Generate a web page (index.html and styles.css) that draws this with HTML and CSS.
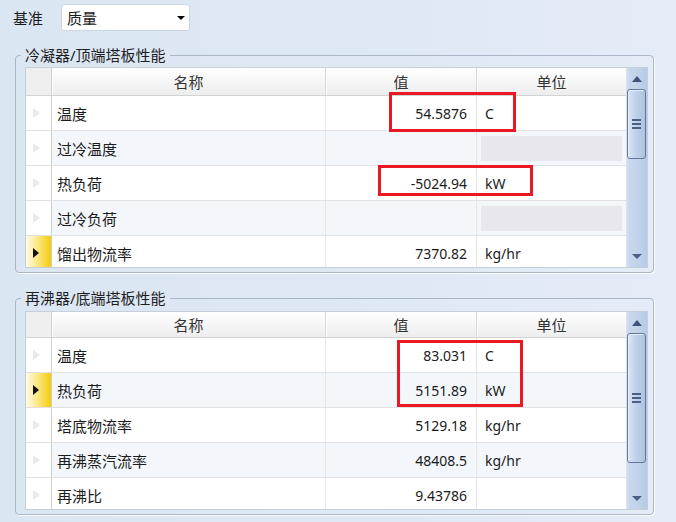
FILE: index.html
```html
<!DOCTYPE html>
<html lang="zh">
<head>
<meta charset="utf-8">
<title>塔板性能</title>
<link rel="stylesheet" href="styles.css">
</head>
<body>
<div class="topbar">
  <span class="lbl">基准</span>
  <div class="combo"><span>质量</span><span class="caret"></span></div>
</div>

<fieldset class="group g1">
  <legend>冷凝器/顶端塔板性能</legend>
  <div class="grid">
    <div class="table">
      <div class="row head">
        <div class="hind"></div><div class="hc">名称</div><div class="hc">值</div><div class="hc last">单位</div>
      </div>
      <div class="body">
        <div class="row"><div class="ind"><span class="tri"></span></div><div class="c name">温度</div><div class="c val">54.5876</div><div class="c unit">C</div></div>
        <div class="row alt"><div class="ind"><span class="tri"></span></div><div class="c name">过冷温度</div><div class="c val"></div><div class="c unit"><div class="dis"></div></div></div>
        <div class="row"><div class="ind"><span class="tri"></span></div><div class="c name">热负荷</div><div class="c val">-5024.94</div><div class="c unit">kW</div></div>
        <div class="row alt"><div class="ind"><span class="tri"></span></div><div class="c name">过冷负荷</div><div class="c val"></div><div class="c unit"><div class="dis"></div></div></div>
        <div class="row"><div class="ind sel"><span class="tri"></span></div><div class="c name">馏出物流率</div><div class="c val">7370.82</div><div class="c unit">kg/hr</div></div>
      </div>
    </div>
    <div class="sb">
      <div class="arr up"></div>
      <div class="track"><div class="thumb t1"><span class="grip"></span></div></div>
      <div class="arr down"></div>
    </div>
  </div>
</fieldset>

<fieldset class="group g2">
  <legend>再沸器/底端塔板性能</legend>
  <div class="grid">
    <div class="table">
      <div class="row head">
        <div class="hind"></div><div class="hc">名称</div><div class="hc">值</div><div class="hc last">单位</div>
      </div>
      <div class="body">
        <div class="row"><div class="ind"><span class="tri"></span></div><div class="c name">温度</div><div class="c val">83.031</div><div class="c unit">C</div></div>
        <div class="row alt"><div class="ind sel"><span class="tri"></span></div><div class="c name">热负荷</div><div class="c val">5151.89</div><div class="c unit">kW</div></div>
        <div class="row"><div class="ind"><span class="tri"></span></div><div class="c name">塔底物流率</div><div class="c val">5129.18</div><div class="c unit">kg/hr</div></div>
        <div class="row alt"><div class="ind"><span class="tri"></span></div><div class="c name">再沸蒸汽流率</div><div class="c val">48408.5</div><div class="c unit">kg/hr</div></div>
        <div class="row"><div class="ind"><span class="tri"></span></div><div class="c name">再沸比</div><div class="c val">9.43786</div><div class="c unit"></div></div>
      </div>
    </div>
    <div class="sb">
      <div class="arr up"></div>
      <div class="track"><div class="thumb t2"><span class="grip"></span></div></div>
      <div class="arr down"></div>
    </div>
  </div>
</fieldset>

<div class="mark m1"></div>
<div class="mark m2"></div>
<div class="mark m3"></div>
</body>
</html>
```

FILE: styles.css
```css
* { box-sizing: border-box; }

html, body { margin: 0; padding: 0; }

body {
  width: 676px;
  height: 522px;
  overflow: hidden;
  position: relative;
  background: linear-gradient(to right, #dbe6f3 0%, #dfe9f5 60%, #e4ecf7 100%);
  font-family: "Noto Sans", "Noto Sans CJK SC", sans-serif;
  font-size: 14px;
  color: #1b1b1b;
}

/* top row */
.topbar {
  display: flex;
  align-items: center;
  height: 27px;
  margin-top: 4px;
  padding-left: 13px;
}
.lbl { width: 48px; font-size: 15px; line-height: 16px; }
.combo {
  width: 129px;
  height: 27px;
  background: #fff;
  border: 1px solid #cdd7e3;
  border-radius: 3px;
  display: flex;
  align-items: center;
  justify-content: space-between;
  padding: 0 4px 0 5px;
  font-size: 15px;
}
.caret {
  width: 0; height: 0;
  border-left: 4px solid transparent;
  border-right: 4px solid transparent;
  border-top: 4px solid #000;
  margin-top: 1px;
}

/* group boxes */
.group {
  margin: 16px 0 0 15px;
  width: 639px;
  min-width: 0;
  border: 1px solid #a9b7c8;
  border-radius: 4px;
  padding: 4px 5px 4px 9px;
  box-shadow: 1px 1px 0 #ffffff;
}
.group.g2 { margin-top: 17px; padding-top: 5px; }
.group legend {
  font-size: 15px;
  line-height: 16px;
  padding: 0 4px;
  margin-left: -4px;
  color: #1e1e1e;
}

/* data grid */
.grid {
  display: flex;
  height: 201px;
  border: 1px solid #c6ced9;
  background: #fff;
}
.g2 .grid { height: 199px; }
.table {
  width: 600px;
  display: flex;
  flex-direction: column;
}
.row {
  display: grid;
  grid-template-columns: 26px 274px 151px 149px;
}
.head {
  height: 28px;
  flex: none;
  border-bottom: 1px solid #d3d3d3;
  font-size: 15px;
  color: #333;
}
.g2 .head { height: 26px; }
.hind {
  background: #efefef;
  border-right: 1px solid #d0d0d0;
}
.hc {
  display: flex;
  align-items: center;
  justify-content: center;
  background: linear-gradient(#ffffff, #f4f4f4 60%, #ededed);
  border-right: 1px solid #d8d8d8;
  box-shadow: inset 1px 0 0 #ffffff;
}
.hc.last { border-right: none; }

.body { flex: 1; overflow: hidden; }
.body .row {
  height: 35px;
  border-bottom: 1px solid #e1e1e1;
}
.ind {
  display: flex;
  align-items: center;
  padding-left: 7px;
  background: #fff;
  border-right: 1px solid #cfcfcf;
}
.tri {
  width: 0; height: 0;
  border-top: 5px solid transparent;
  border-bottom: 5px solid transparent;
  border-left: 7px solid #e9e9e9;
}
.ind.sel {
  background: linear-gradient(to right, #fffbe6 0%, #fbe67e 50%, #f5cc08 100%);
}
.ind.sel .tri {
  border-top-width: 5px;
  border-bottom-width: 5px;
  border-left: 6px solid #111;
}
.c {
  display: flex;
  align-items: center;
  border-right: 1px solid #e6e6e6;
  background: #fff;
  white-space: nowrap;
}
.row.alt .c { background: #f3f7fc; }
.c.unit { border-right: none; padding-left: 8px; }
.c.name { padding-left: 5px; font-size: 15px; }
.c.val { justify-content: flex-end; padding-right: 9px; }
.dis {
  flex: 1;
  height: 25px;
  margin-left: -4px;
  margin-right: 4px;
  background: #e8e7ee;
}

/* scrollbar */
.sb {
  width: 21px;
  display: flex;
  flex-direction: column;
  background: linear-gradient(to right, #dce6f2 0, #c8d7ec 3px, #c0d2ea 60%, #b6cae4 100%);
}
.arr {
  height: 21px;
  flex: none;
  display: flex;
  align-items: center;
  justify-content: center;
}
.arr::after {
  content: "";
  width: 0; height: 0;
  border-left: 5px solid transparent;
  border-right: 5px solid transparent;
}
.up::after { border-bottom: 6px solid #3e5376; }
.down::after { border-top: 5px solid #4a5f82; }
.track { flex: 1; padding: 0 1px; }
.thumb {
  border: 1px solid #61779c;
  border-radius: 3px;
  background: linear-gradient(to right, #dbe6f5 0%, #bfd1ea 45%, #aec3e1 100%);
  box-shadow: inset 1px 1px 0 #e8f0fa;
  display: flex;
  align-items: center;
  justify-content: center;
}
.t1 { height: 70px; }
.t2 { height: 130px; }
.grip {
  width: 9px;
  height: 10px;
  background: repeating-linear-gradient(#4b5f84 0 2px, transparent 2px 4px);
}

/* red annotation boxes */
.mark {
  position: absolute;
  border: 3px solid #ea1822;
}
.m1 { left: 389px; top: 92px; width: 127px; height: 40px; }
.m2 { left: 378px; top: 165px; width: 155px; height: 31px; }
.m3 { left: 397px; top: 340px; width: 126px; height: 67px; }
```
